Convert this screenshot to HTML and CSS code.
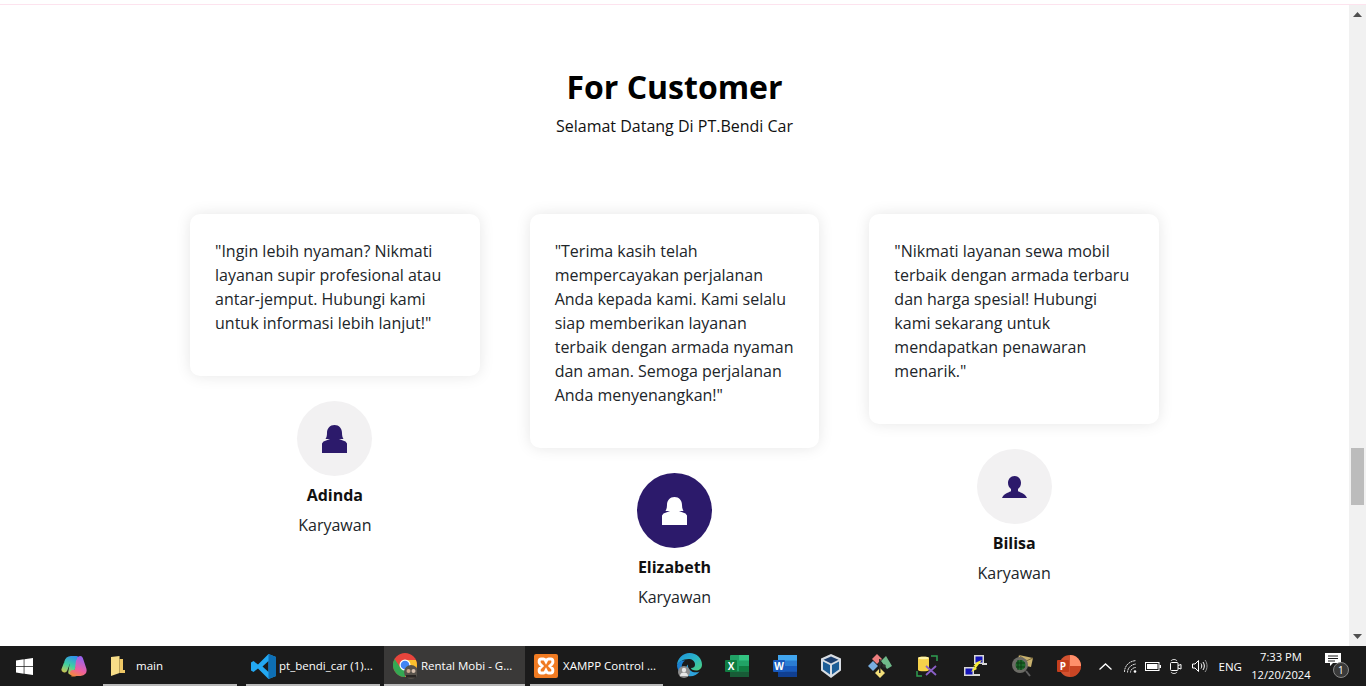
FILE: index.html
```html
<!DOCTYPE html>
<html lang="id">
<head>
<meta charset="utf-8">
<title>Rental Mobil</title>
<link rel="stylesheet" href="styles.css">
</head>
<body>
<div class="top-strip"></div>
<div class="window">
  <main class="page">
    <section class="customers">
      <h2 class="title">For Customer</h2>
      <p class="subtitle">Selamat Datang Di PT.Bendi Car</p>
      <div class="cards">
        <article class="person">
          <div class="quote"><p>"Ingin lebih nyaman? Nikmati layanan supir profesional atau antar-jemput. Hubungi kami untuk informasi lebih lanjut!"</p></div>
          <div class="avatar">
            <svg class="face" width="25" height="28" viewBox="0 0 25 28"><path d="M12.500 0C8 0 5 3.500 5 8c0 2.500-.5 4.500-1.500 6H8L1.500 16.500 0 18.500V28h25v-9.500L23.500 16.500 17 14h4.500c-1-1.500-1.500-3.500-1.500-6 0-4.500-3-8-7.500-8z"/></svg>
          </div>
          <h3 class="name">Adinda</h3>
          <p class="role">Karyawan</p>
        </article>
        <article class="person">
          <div class="quote"><p>"Terima kasih telah mempercayakan perjalanan Anda kepada kami. Kami selalu siap memberikan layanan terbaik dengan armada nyaman dan aman. Semoga perjalanan Anda menyenangkan!"</p></div>
          <div class="avatar avatar-active">
            <svg class="face" width="25" height="28" viewBox="0 0 25 28"><path d="M12.500 0C8 0 5 3.500 5 8c0 2.500-.5 4.500-1.500 6H8L1.500 16.500 0 18.500V28h25v-9.500L23.500 16.500 17 14h4.500c-1-1.500-1.500-3.500-1.500-6 0-4.500-3-8-7.500-8z"/></svg>
          </div>
          <h3 class="name">Elizabeth</h3>
          <p class="role">Karyawan</p>
        </article>
        <article class="person">
          <div class="quote"><p>"Nikmati layanan sewa mobil terbaik dengan armada terbaru dan harga spesial! Hubungi kami sekarang untuk mendapatkan penawaran menarik."</p></div>
          <div class="avatar">
            <svg class="face" width="25" height="22" viewBox="0 0 25 22"><path d="M12.500 0C8.700 0 6 3 6 6.800c0 2.700 1.200 5 3 6.200v2.200C5.500 16.800 1.500 18 0 22h25c-1.500-4-5.500-5.200-9-6.800V13c1.800-1.200 3-3.500 3-6.200C19 3 16.300 0 12.500 0z"/></svg>
          </div>
          <h3 class="name">Bilisa</h3>
          <p class="role">Karyawan</p>
        </article>
      </div>
    </section>
  </main>
  <div class="scrollbar">
    <svg class="arrow" width="9" height="5" viewBox="0 0 9 5"><path d="M4.500 0L9 5H0z"/></svg>
    <div class="thumb"></div>
    <svg class="arrow arrow-down" width="9" height="5" viewBox="0 0 9 5"><path d="M0 0h9L4.500 5z"/></svg>
  </div>
</div>
<footer class="taskbar">
  <div class="start">
    <svg width="17" height="17" viewBox="0 0 17 17"><path fill="#fff" d="M0 2.400L7.700 1.300V8H0zM8.400 1.200L17 0v8H8.400zM0 8.800h7.700v6.900L0 14.600zM8.400 8.800H17V17l-8.600-1.200z"/></svg>
  </div>
  <div class="pin pin-copilot">
    <svg width="26" height="22" viewBox="0 0 26 22">
      <defs>
        <linearGradient id="cp1" gradientUnits="userSpaceOnUse" x1="14" y1="1" x2="6" y2="21"><stop offset="0" stop-color="#2f8df0"/><stop offset=".5" stop-color="#3fd0a0"/><stop offset="1" stop-color="#f6c33c"/></linearGradient>
        <linearGradient id="cp2" gradientUnits="userSpaceOnUse" x1="20" y1="3" x2="12" y2="21"><stop offset="0" stop-color="#9b63ec"/><stop offset=".6" stop-color="#ee5fa0"/><stop offset="1" stop-color="#f4883c"/></linearGradient>
      </defs>
      <path fill="none" stroke="url(#cp1)" stroke-width="6" stroke-linecap="round" stroke-linejoin="round" d="M15 4H10C7 4 6.500 6 6 8L3.500 14.500"/>
      <path fill="url(#cp1)" d="M10 1h4c2.500 0 3.800 1.500 3.200 4L13 17c-.7 2-2.500 3-4 2.500-2-.5-2-2.500-1.500-4z"/>
      <path fill="none" stroke="url(#cp2)" stroke-width="6" stroke-linecap="round" stroke-linejoin="round" d="M19 4l3.500 10.500c.5 2-.5 3.500-3 3.500H12"/>
      <path fill="url(#cp2)" d="M15 5.500c1-2 4-2.500 5-.5l1.500 7-3.500 6.500c-1 1.500-2.500 3-4.500 3h-4c2.500-.5 3.500-2 4-3.500z"/>
    </svg>
  </div>
  <div class="task task-main">
    <svg width="16" height="20" viewBox="0 0 16 20"><path fill="#f7dd88" d="M1 1l8.500-1v17L1 20z"/><path fill="#eec765" d="M9.500 3v14H15V14H13V3z"/></svg>
    <span class="task-label">main</span>
  </div>
  <div class="task task-code">
    <svg width="25" height="25" viewBox="0 0 25 25"><path fill="#23a8f2" d="M17.500 0L25 3v19l-7.500 3L7 14.500 2.500 18 0 16.500V8.500L2.500 7 7 10.500zM17.500 7l-6 5.500 6 5.500z"/><path fill="#0e6fb5" d="M17.500 0L25 3v19l-7.500 3V18V7z"/></svg>
    <span class="task-label">pt_bendi_car (1)...</span>
  </div>
  <div class="task task-chrome">
    <svg width="24" height="26" viewBox="0 0 24 26">
      <circle cx="12" cy="12" r="12" fill="#e8453c"/>
      <path fill="#34a853" d="M12 24A12 12 0 0 1 1.600 6L7 14l5 3z"/>
      <path fill="#fbc02d" d="M24 12a12 12 0 0 1-12 12l4.500-9L12 7h10.900c.7 1.500 1.100 3.200 1.100 5z"/>
      <circle cx="12" cy="12" r="5.500" fill="#fff"/><circle cx="12" cy="12" r="4.300" fill="#4285f4"/>
      <circle cx="18" cy="19" r="7" fill="#57524b"/><circle cx="15.500" cy="18" r="2" fill="#c9a58c"/><circle cx="20.500" cy="18" r="2" fill="#d7c0ae"/><path fill="#2a2725" d="M13 22h10v2.500h-10z"/>
    </svg>
    <span class="task-label">Rental Mobi - G...</span>
  </div>
  <div class="task task-xampp">
    <svg width="24" height="24" viewBox="0 0 24 24"><rect width="24" height="24" rx="2" fill="#f07b22"/><path fill="none" stroke="#fff" stroke-width="3" d="M7 5h2.500c1.500 0 2 1.500 2.500 2.500C12.500 6.500 13 5 14.500 5H17c2 0 2.500 3.500 1 5l-2 2 2 2c1.500 1.500 1 5-1 5h-2.500c-1.500 0-2-1.500-2.500-2.500-.5 1-1 2.500-2.500 2.500H7c-2 0-2.500-3.500-1-5l2-2-2-2C4.500 8.500 5 5 7 5z"/></svg>
    <span class="task-label">XAMPP Control ...</span>
  </div>
  <div class="pin pin-edge">
    <svg width="25" height="26" viewBox="0 0 25 26">
      <defs><linearGradient id="ed" x1="0" y1="0" x2="1" y2="1"><stop offset="0" stop-color="#1e8fdc"/><stop offset=".5" stop-color="#2ab5c8"/><stop offset="1" stop-color="#4fd37a"/></linearGradient></defs>
      <path fill="url(#ed)" d="M12.500 0C20 0 25 5.500 25 11.500c0 4-3 6-6 6s-5-1-5-2.500c3 0 4-1.500 4-3.500C18 8 15 6 11.500 6 6 6 2 9 0 12 .5 5 6 0 12.500 0z"/>
      <path fill="#1a7fd0" d="M0 12c1-3 4.500-5 8-4.500C5 9.500 4 13 5 17c1 3 3 5 6 6-6 0-11-5-11-11z"/>
      <path fill="#2ea3dc" d="M11 23c4 1 9-.5 11.500-4.500-3 1.500-7 1-9-1-2-1.500-3-4-2.500-6-3 2-3 8 0 11.500z"/>
      <circle cx="7" cy="19" r="6" fill="#8d8d8d"/><circle cx="7" cy="17" r="2.200" fill="#e6e6e6"/><path fill="#e6e6e6" d="M3 23c0-2.500 1.800-3.500 4-3.500s4 1 4 3.500z"/>
    </svg>
  </div>
  <div class="pin pin-office">
    <svg width="24" height="22" viewBox="0 0 24 22"><rect x="5" width="19" height="22" rx="1" fill="#21a366"/><rect x="14" width="10" height="5.500" fill="#33c481"/><rect x="14" y="11" width="10" height="5.500" fill="#107c41"/><rect x="5" y="16.500" width="19" height="5.500" fill="#185c37"/><rect y="5" width="12" height="12" rx="1" fill="#107c41"/><text class="office-letter" x="6" y="14.800">X</text></svg>
  </div>
  <div class="pin pin-office">
    <svg width="24" height="22" viewBox="0 0 24 22"><rect x="5" width="19" height="22" rx="1" fill="#2b7cd3"/><rect x="5" width="19" height="5.500" fill="#41a5ee"/><rect x="5" y="11" width="19" height="5.500" fill="#185abd"/><rect x="5" y="16.500" width="19" height="5.500" fill="#103f91"/><rect y="5" width="12" height="12" rx="1" fill="#185abd"/><text class="office-letter" x="6" y="14.800">W</text></svg>
  </div>
  <div class="pin pin-vbox">
    <svg width="20" height="24" viewBox="0 0 20 24"><path fill="#d8dde3" d="M10 0l10 4.500v12L10 24 0 16.500v-12z"/><path fill="#1c3f6e" d="M10 2.500l7.500 3.200L10 9.500 2.500 5.700z"/><path fill="#1d5d96" d="M2 7.500l7 3.500v9.500l-7-5zM18 7.500L11 11v9.500l7-5z"/></svg>
  </div>
  <div class="pin pin-gitk">
    <svg width="24" height="24" viewBox="0 0 24 24"><path fill="#ee7f7f" d="M8 0l5 5-5 5-5-5z" transform="translate(1 0)"/><path fill="#6fb98a" d="M13 7l5-5 6 10-5 3z"/><path fill="#79aee0" d="M0 12l5-5 5 5-5 5z"/><path fill="#f3df7a" d="M12 14l5 5-5 5-5-5z"/><path fill="#2b2b2b" d="M11 5h1.500v14H11z"/><circle cx="12" cy="10" r="1.800" fill="#2b2b2b"/><circle cx="16" cy="12" r="1.800" fill="#2b2b2b"/></svg>
  </div>
  <div class="pin pin-hammer">
    <svg width="22" height="22" viewBox="0 0 22 22"><path fill="#f6d24a" d="M2 3c0-1.700 11-1.700 11 0v12c0 1.700-11 1.700-11 0z"/><path fill="#fff3a6" d="M2 3c0-1.700 11-1.700 11 0s-11 1.700-11 0z"/><path fill="none" stroke="#2f9e52" stroke-width="1.500" d="M15 1h6v5M1 16v5h5"/><path fill="none" stroke="#8a5fc7" stroke-width="1.800" d="M10 11l10 9M20 11L10 20"/></svg>
  </div>
  <div class="pin pin-net">
    <svg width="24" height="24" viewBox="0 0 24 24"><path fill="#d8d8d8" d="M11 1h10v9H11zM1 13h10v9H1zM9 20h8v2H9zM19 9h5v2h-5z"/><path fill="#1515b8" d="M12.500 2.500h7v6h-7zM2.500 14.500h7v6h-7z"/><path fill="#f7ea3a" d="M14 8l5-2-6 8 1 1-6 3 4-6-2 .5z"/></svg>
  </div>
  <div class="pin pin-mail">
    <svg width="23" height="24" viewBox="0 0 23 24"><path fill="#c8b16e" d="M8 1l14 3-2 9-14-3z"/><path fill="none" stroke="#7b6a3a" d="M8 1l7 6 7-3"/><circle cx="9" cy="11" r="8" fill="#6c6c66"/><circle cx="9.500" cy="11" r="5" fill="#1d6a2a"/><path stroke="#0c3d14" d="M7 6v10M10 6v10M5 9h9M5 13h9"/><path stroke="#5f5f5f" stroke-width="2" d="M15 17l4 5"/></svg>
  </div>
  <div class="pin pin-ppt">
    <svg width="24" height="22" viewBox="0 0 24 22"><circle cx="13" cy="11" r="11" fill="#d35230"/><path fill="#ff8f6b" d="M13 0a11 11 0 0 1 11 11H13z"/><path fill="#c43e1c" d="M13 11h11a11 11 0 0 1-11 11z" opacity=".6"/><rect y="5" width="12" height="12" rx="1" fill="#c43e1c"/><text class="office-letter" x="6" y="14.800">P</text></svg>
  </div>
  <div class="tray">
    <svg class="tray-chevron" width="13" height="7" viewBox="0 0 13 7"><path fill="none" stroke="#fff" stroke-width="1.300" d="M.5 6.500l6-5.500 6 5.500"/></svg>
    <svg class="tray-wifi" width="13" height="13" viewBox="0 0 13 13"><path fill="none" stroke="#ddd" d="M.5 12C.5 6 5 1 12 .6M3.500 12.500C3.500 8 7 4.500 12 4M6.500 12.500C6.500 10 8.500 7.500 12 7.500" stroke-dasharray="2 .5"/><circle cx="11" cy="11.500" r="1.300" fill="#fff"/></svg>
    <svg class="tray-battery" width="16" height="9" viewBox="0 0 16 9"><rect x=".5" y=".5" width="13.500" height="8" fill="none" stroke="#fff"/><rect x="2" y="2" width="10.500" height="5" fill="#fff"/><rect x="14.500" y="3" width="1.500" height="3" fill="#fff"/></svg>
    <svg class="tray-cam" width="12" height="17" viewBox="0 0 12 17"><path fill="none" stroke="#ddd" d="M1 3c1-2 5-2 6 0M1 14c1 2 5 2 6 0"/><rect x=".5" y="4.500" width="7.500" height="8" rx="1" fill="none" stroke="#fff"/><path fill="none" stroke="#fff" d="M8 7.500l3-1v4.500l-3-1"/></svg>
    <svg class="tray-vol" width="16" height="14" viewBox="0 0 16 14"><path fill="none" stroke="#fff" d="M.5 5h2.500l3.500-3.500v11L3 9H.5zM9 4.500c1 1.500 1 3.500 0 5M11 3c1.800 2.500 1.800 5.500 0 8"/><path fill="none" stroke="#999" d="M13 1c2.700 3.500 2.700 8.500 0 12"/></svg>
    <span class="tray-lang">ENG</span>
    <div class="clock"><span>7:33 PM</span><span>12/20/2024</span></div>
    <div class="notify">
      <svg class="notify-icon" width="16" height="14" viewBox="0 0 16 14"><path fill="#fff" d="M0 0h16v10H8l-3 3v-3H0z"/><path stroke="#1a1a1a" d="M3 3h10M3 5.500h10M3 8h7"/></svg>
      <span class="notify-count">1</span>
    </div>
  </div>
</footer>
</body>
</html>
```
FILE: styles.css
```css
* { box-sizing: border-box; }
html, body { height: 100%; }
body {
  margin: 0;
  display: flex;
  flex-direction: column;
  overflow: hidden;
  background: #fff;
  font-family: "Open Sans", "Noto Sans", sans-serif;
}
.top-strip {
  height: 5px;
  flex: none;
  border-bottom: 1px solid #fde3ee;
}
.window {
  flex: 1;
  min-height: 0;
  display: flex;
}
.page {
  flex: 1;
  min-width: 0;
  overflow: hidden;
}
.customers {
  padding-top: 63px;
  text-align: center;
}
.title {
  margin: 0 0 8px;
  font-size: 32px;
  line-height: 38.4px;
  font-weight: 700;
  color: #000;
}
.subtitle {
  margin: 0;
  font-size: 16px;
  line-height: 24px;
  color: #111;
}
.cards {
  width: 969px;
  margin: 76px auto 0;
  display: grid;
  grid-template-columns: repeat(3, 289.67px);
  justify-content: space-between;
  align-items: start;
}
.person { display: flex; flex-direction: column; align-items: center; }
.quote {
  width: 100%;
  padding: 25px 25px 9px;
  background: #fff;
  border-radius: 10px;
  box-shadow: 0 0 15px rgba(0, 0, 0, 0.1);
  text-align: left;
  font-size: 16px;
  line-height: 24px;
  color: #212529;
}
.quote p { margin: 0 0 16px; padding-bottom: 16px; }
.avatar {
  width: 75px;
  height: 75px;
  margin-top: 25px;
  border-radius: 50%;
  background: #f2f1f2;
  display: flex;
  align-items: center;
  justify-content: center;
  color: #2c1a6b;
}
.avatar-active { background: #2c1a6b; color: #fff; }
.face { fill: currentColor; display: block; }
.name {
  margin: 7px 0 0;
  font-size: 16px;
  line-height: 24px;
  font-weight: 700;
  color: #111;
}
.role {
  margin: 6px 0 0;
  font-size: 16px;
  line-height: 24px;
  color: #212529;
}
.scrollbar {
  width: 17px;
  flex: none;
  background: #f1f1f1;
  display: flex;
  flex-direction: column;
  align-items: center;
}
.arrow { fill: #505050; margin-top: 7px; flex: none; }
.thumb {
  width: 13px;
  height: 57px;
  margin-top: 431px;
  background: #bcbcbc;
}
.arrow-down { margin-top: 129px; }
.taskbar {
  height: 40px;
  flex: none;
  display: flex;
  align-items: center;
  background: #1b1b1b;
  color: #fff;
  font-size: 11.5px;
}
.start { width: 48px; flex: none; display: flex; justify-content: center; }
.pin { flex: none; display: flex; justify-content: center; align-items: center; height: 40px; width: 47.5px; }
.pin-copilot { width: 52px; }
.pin-vbox { padding-right: 2px; }
.pin-ppt { padding-right: 2px; }
.task {
  flex: none;
  height: 40px;
  padding-top: 2px;
  display: flex;
  align-items: center;
  border-bottom: 2px solid #b9b9b9;
  white-space: nowrap;
}
.task-main { width: 134px; margin-left: 3px; padding-left: 7px; gap: 10px; margin-right: 9px; }
.task-code { width: 134px; padding-left: 5px; gap: 3px; margin-right: 4px; }
.task-chrome { width: 141px; padding-left: 9px; gap: 4px; background: #3a3938; margin-right: 5px; }
.task-xampp { width: 133px; padding-left: 4px; gap: 5px; margin-right: 3px; }
.task-label { line-height: 16px; }
.office-letter {
  font-family: "Open Sans", sans-serif;
  font-size: 10px;
  font-weight: 700;
  fill: #fff;
  text-anchor: middle;
}
.tray {
  margin-left: 4px;
  display: flex;
  align-items: center;
  flex: none;
}
.tray-chevron { margin-left: 1px; }
.tray-wifi { margin-left: 12px; }
.tray-battery { margin-left: 8px; }
.tray-cam { margin-left: 9px; }
.tray-vol { margin-left: 10px; }
.tray-lang { margin-left: 11px; font-size: 11.5px; }
.clock {
  width: 78px;
  display: flex;
  flex-direction: column;
  align-items: center;
  font-size: 11.2px;
  line-height: 18px;
}
.notify { margin-left: 5px; width: 24px; height: 26px; position: relative; }
.notify-icon { display: block; }
.notify-count {
  position: absolute;
  left: 8px;
  top: 9px;
  width: 16px;
  height: 16px;
  border-radius: 50%;
  background: #3a3a3a;
  border: 1px solid #888;
  font-size: 10px;
  line-height: 14px;
  text-align: center;
}
```
